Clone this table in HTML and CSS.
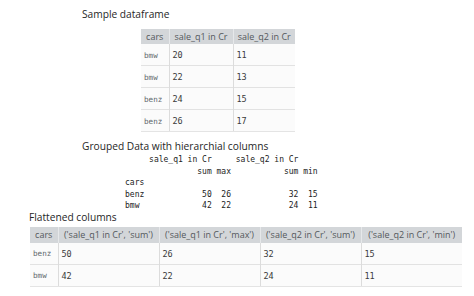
FILE: index.html
```
<!DOCTYPE html>
<html>
<head>
<meta charset="utf-8">
<link rel="stylesheet" href="styles.css">
</head>
<body>
<div class="page">
  <h2 class="title title-sample">Sample dataframe</h2>
  <table class="df df-sample">
    <colgroup><col class="c-idx1"><col class="c-q1"><col class="c-q2"></colgroup>
    <thead><tr><th>cars</th><th>sale_q1 in Cr</th><th>sale_q2 in Cr</th></tr></thead>
    <tbody>
      <tr><td class="idx">bmw</td><td>20</td><td>11</td></tr>
      <tr><td class="idx">bmw</td><td>22</td><td>13</td></tr>
      <tr><td class="idx">benz</td><td>24</td><td>15</td></tr>
      <tr><td class="idx">benz</td><td>26</td><td>17</td></tr>
    </tbody>
  </table>

  <h2 class="title title-grouped">Grouped Data with hierarchial columns</h2>
  <pre class="grouped">     sale_q1 in Cr     sale_q2 in Cr    
               sum max           sum min
cars                                    
benz            50  26            32  15
bmw             42  22            24  11</pre>

  <h2 class="title title-flat">Flattened columns</h2>
  <table class="df df-flat">
    <colgroup><col class="c-idx2"><col class="c-w"><col class="c-w"><col class="c-w"><col class="c-w"></colgroup>
    <thead><tr><th>cars</th><th>('sale_q1 in Cr', 'sum')</th><th>('sale_q1 in Cr', 'max')</th><th>('sale_q2 in Cr', 'sum')</th><th>('sale_q2 in Cr', 'min')</th></tr></thead>
    <tbody>
      <tr><td class="idx">benz</td><td>50</td><td>26</td><td>32</td><td>15</td></tr>
      <tr><td class="idx">bmw</td><td>42</td><td>22</td><td>24</td><td>11</td></tr>
    </tbody>
  </table>
</div>
</body>
</html>
```

FILE: styles.css
```
html, body {
  margin: 0;
  padding: 0;
  background: #ffffff;
}

.page {
  display: flex;
  flex-direction: column;
  align-items: flex-start;
  width: 474px;
  height: 296px;
  overflow: hidden;
}

.title {
  margin: 0;
  font-family: "Open Sans", "Noto Sans", sans-serif;
  font-weight: 400;
  font-size: 10.2px;
  line-height: 14px;
  color: #262626;
  white-space: nowrap;
}

.title-sample {
  margin: 7px 0 0 82px;
}

.title-grouped {
  margin: 7px 0 0 82px;
}

.title-flat {
  margin: -2px 0 0 29px;
}

.df {
  border-collapse: collapse;
  table-layout: fixed;
  background: #fbfbfb;
}

.df-sample {
  margin: 8px 0 0 141px;
  width: 154px;
}

.df-flat {
  margin: 3px 0 0 30px;
  width: 431px;
}

.c-idx1 { width: 28px; }
.c-q1 { width: 64px; }
.c-q2 { width: 62px; }
.c-idx2 { width: 28px; }
.c-w { width: 101px; }

.df th {
  background: #d3d6d9;
  color: #53585c;
  font-family: "Open Sans", "Noto Sans", sans-serif;
  font-weight: 400;
  font-size: 9px;
  text-align: center;
  padding: 0 3px;
  white-space: nowrap;
  overflow: hidden;
  border-left: 1px solid #e6e8ea;
}

.df th:first-child {
  border-left: none;
}

.df-sample th {
  height: 15px;
}

.df-flat th {
  height: 16px;
}

.df td {
  font-family: "DejaVu Sans Mono", "Liberation Mono", monospace;
  font-size: 8.5px;
  color: #3a3a3a;
  text-align: left;
  padding: 1px 3px 0;
  border-top: 1px solid #e2e2e2;
  border-left: 1px solid #dcdcdc;
  vertical-align: middle;
  white-space: nowrap;
}

.df-sample td { height: 20px; }
.df-flat td { height: 20px; }

.df td.idx {
  border-left: none;
  font-size: 7.6px;
  color: #62676c;
}

.df tbody tr:first-child td {
  border-top: none;
}

.df tbody tr:last-child td {
  border-bottom: 1px solid #e4e4e4;
}

.grouped {
  margin: 1px 0 0 125px;
  font-family: "DejaVu Sans Mono", "Liberation Mono", monospace;
  font-size: 8px;
  line-height: 11.5px;
  color: #222222;
}
```
